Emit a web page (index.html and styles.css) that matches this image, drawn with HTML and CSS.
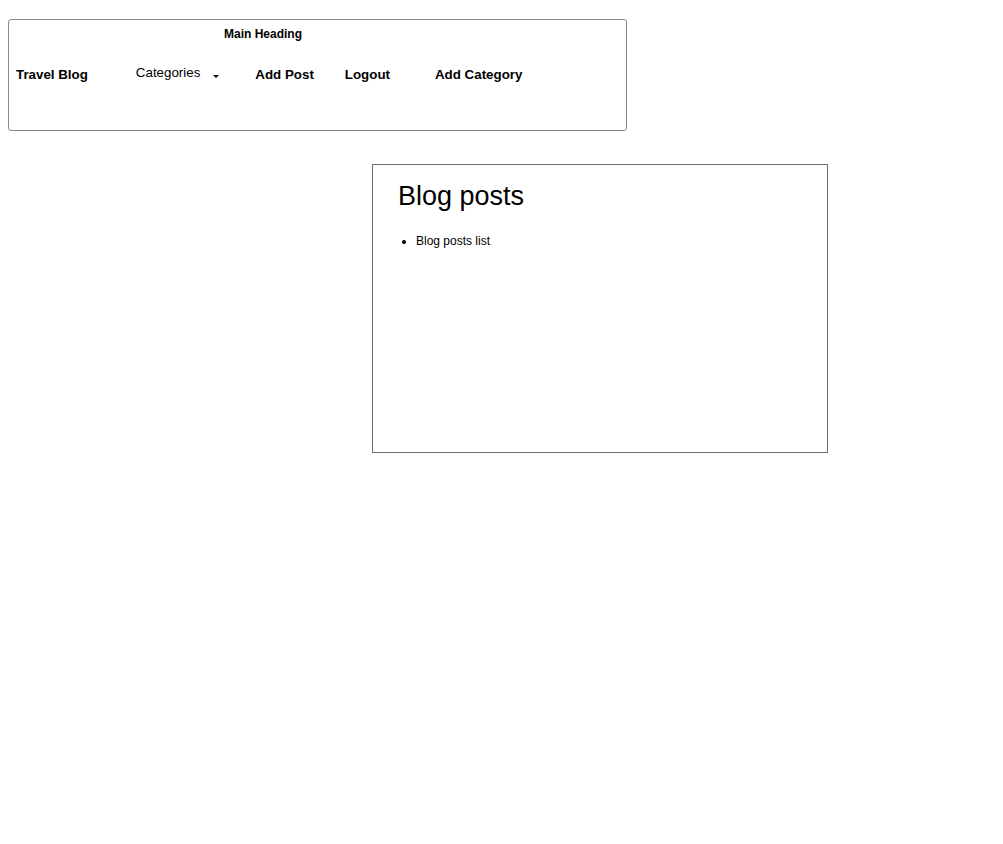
FILE: index.html
```html
<!DOCTYPE html>
<html>
<head>
<meta charset="utf-8">
<link rel="stylesheet" href="styles.css">
</head>
<body>
<div class="page">
  <header class="header">
    <h1 class="main-heading">Main Heading</h1>
    <nav class="nav">
      <a class="nav-item brand">Travel Blog</a>
      <a class="nav-item categories">Categories<span class="caret"></span></a>
      <a class="nav-item add-post">Add Post</a>
      <a class="nav-item logout">Logout</a>
      <a class="nav-item add-category">Add Category</a>
    </nav>
  </header>
  <main class="posts">
    <h2 class="posts-title">Blog posts</h2>
    <ul class="posts-list">
      <li>Blog posts list</li>
    </ul>
  </main>
</div>
</body>
</html>
```

FILE: styles.css
```css
html, body {
  margin: 0;
  padding: 0;
  background: #fff;
}
body {
  font-family: "Liberation Sans", Arial, sans-serif;
  color: #000;
}
.page {
  padding: 19px 0 0 8px;
}
.header {
  box-sizing: border-box;
  width: 619px;
  height: 112px;
  border: 1px solid #8a8a8a;
  border-radius: 3px;
  padding-top: 7px;
}
.main-heading {
  margin: 0;
  width: 508px;
  text-align: center;
  font-size: 12px;
  font-weight: bold;
  line-height: 14px;
}
.nav {
  display: flex;
  align-items: center;
  margin-top: 26px;
  padding-left: 7px;
  height: 16px;
}
.nav-item {
  font-size: 13.33px;
  font-weight: bold;
  line-height: 16px;
  white-space: nowrap;
}
.categories {
  font-weight: normal;
  margin-left: 48px;
  margin-bottom: 4px;
  display: flex;
  align-items: center;
}
.caret {
  display: inline-block;
  width: 0;
  height: 0;
  border-top: 3px solid #000;
  border-left: 3.5px solid transparent;
  border-right: 3.5px solid transparent;
  margin-left: 13px;
  margin-top: 6px;
}
.add-post {
  margin-left: 36px;
}
.logout {
  margin-left: 31px;
}
.add-category {
  margin-left: 45px;
}
.posts {
  box-sizing: border-box;
  width: 456px;
  height: 289px;
  margin: 33px 0 0 364px;
  border: 1px solid #6e6e6e;
  padding: 16px 0 0 25px;
}
.posts-title {
  margin: 0;
  font-size: 27px;
  font-weight: normal;
  line-height: 31px;
}
.posts-list {
  margin: 22px 0 0;
  padding-left: 18px;
  font-size: 12px;
  line-height: 14px;
}
```
